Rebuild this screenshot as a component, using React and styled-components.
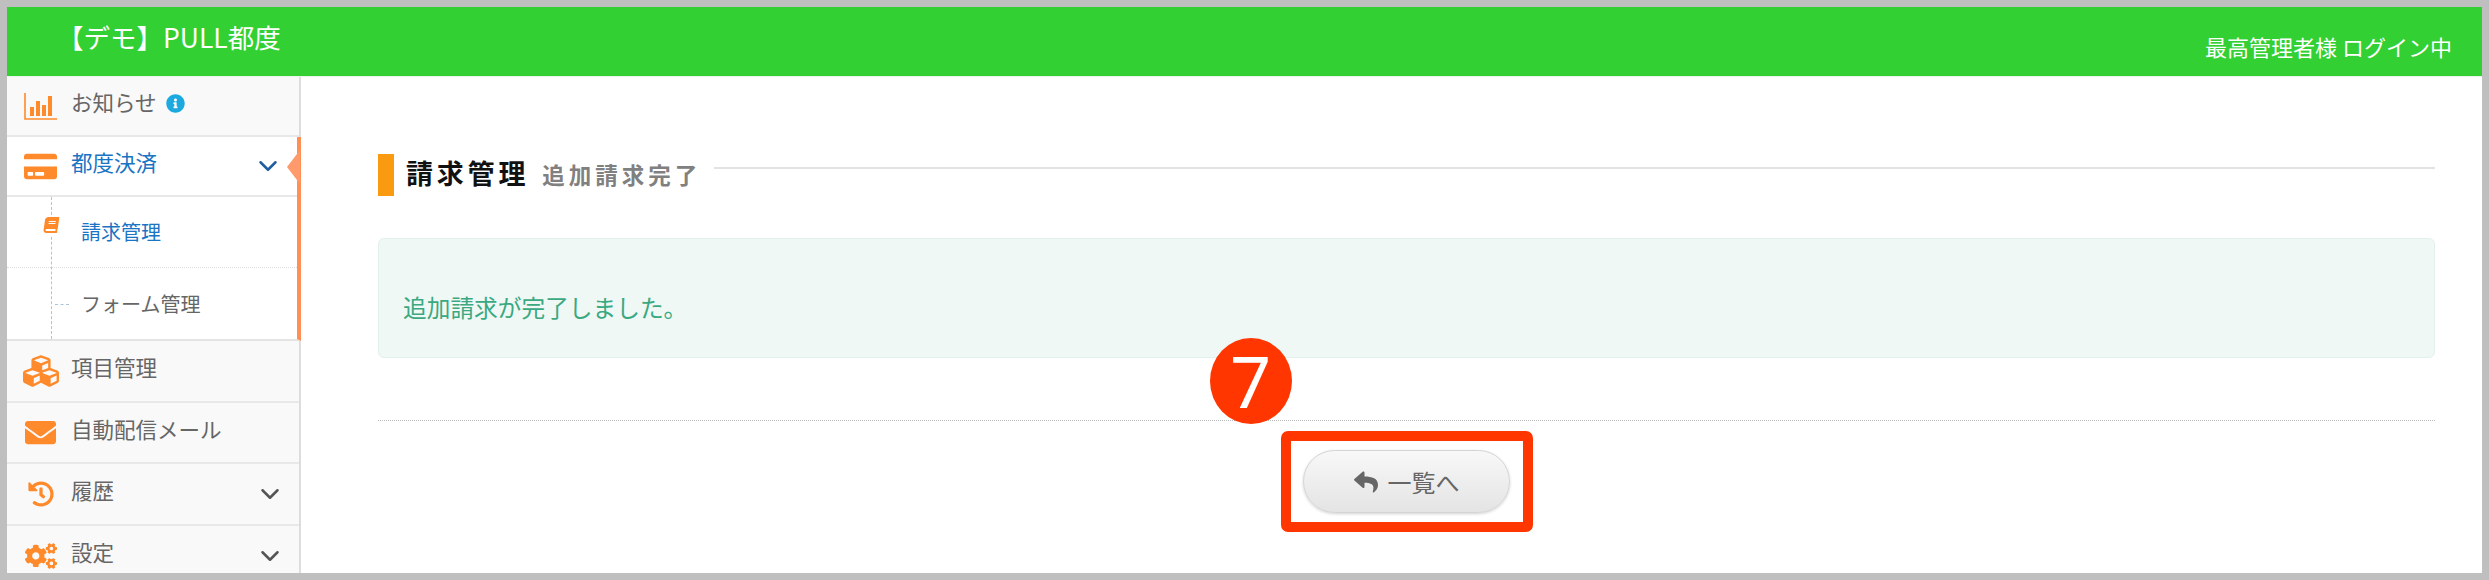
import styled, { createGlobalStyle } from 'styled-components';
import { FaBook, FaCogs, FaCreditCard, FaCubes, FaEnvelope, FaHistory, FaInfoCircle, FaReply } from 'react-icons/fa';
import { ChevronDown } from 'lucide-react';

const GlobalStyle = createGlobalStyle`
  html, body {
    margin: 0;
    padding: 0;
    background: #fff;
  }
  * {
    box-sizing: border-box;
  }
`;

const ChartIcon = () => (
  <svg width="33" height="27" viewBox="0 0 33 27">
    <path d="M1 0v26h32" fill="none" stroke="#ff8a2b" strokeWidth="1.6" />
    <path d="M6 14h4v9H6zM12 8h4v15h-4zM18 12h4v11h-4zM24 3h4v20h-4z" fill="#ff8a2b" />
  </svg>
);

const menu = [
  { label: 'お知らせ', icon: <ChartIcon />, info: true, height: 60 },
  { label: '項目管理', icon: <FaCubes size={36} />, height: 62 },
  { label: '自動配信メール', icon: <FaEnvelope size={31} />, height: 61 },
  { label: '履歴', icon: <FaHistory size={26} />, arrow: true, height: 62 },
  { label: '設定', icon: <FaCogs size={32} />, arrow: true, height: 62 },
];

export default function App() {
  return (
    <Frame>
      <GlobalStyle />
      <Header>
        <Brand>【デモ】PULL都度</Brand>
        <User>最高管理者様 ログイン中</User>
      </Header>
      <Body>
        <Sidebar>
          <MenuRow $height={menu[0].height}>
            <IconBox>{menu[0].icon}</IconBox>
            <Label>{menu[0].label}</Label>
            <Info><FaInfoCircle size={19} /></Info>
          </MenuRow>
          <ActiveGroup>
            <MenuRow $height={60} $active>
              <IconBox><FaCreditCard size={33} /></IconBox>
              <Label>都度決済</Label>
              <Arrow $active><ChevronDown size={30} /></Arrow>
            </MenuRow>
            <SubList>
              <SubRow $active>
                <BookIcon><FaBook size={16} /></BookIcon>
                請求管理
              </SubRow>
              <SubRow>
                <Dash />
                フォーム管理
              </SubRow>
            </SubList>
            <Pointer />
          </ActiveGroup>
          {menu.slice(1).map(item => (
            <MenuRow key={item.label} $height={item.height}>
              <IconBox>{item.icon}</IconBox>
              <Label>{item.label}</Label>
              {item.arrow && <Arrow><ChevronDown size={30} /></Arrow>}
            </MenuRow>
          ))}
        </Sidebar>
        <Main>
          <TitleRow>
            <TitleBar />
            <Title>請求管理</Title>
            <SubTitle>追加請求完了</SubTitle>
            <TitleLine />
          </TitleRow>
          <Alert>追加請求が完了しました。</Alert>
          <Divider />
          <Actions>
            <Highlight>
              <Badge>7</Badge>
              <BackButton>
                <FaReply size={24} />
                一覧へ
              </BackButton>
            </Highlight>
          </Actions>
        </Main>
      </Body>
    </Frame>
  );
}

const Frame = styled.div`
  width: 2489px;
  height: 580px;
  border: 7px solid #bfbfbf;
  display: flex;
  flex-direction: column;
  overflow: hidden;
  font-family: 'Noto Sans CJK JP', 'Noto Sans', sans-serif;
  color: #666;
`;

const Header = styled.header`
  height: 69px;
  flex: none;
  background: #32d032;
  color: #fff;
  display: flex;
  justify-content: space-between;
  padding: 0 30px 0 50px;
`;

const Brand = styled.div`
  font-size: 26.5px;
  line-height: 28px;
  padding-top: 16px;
`;

const User = styled.div`
  font-size: 22px;
  line-height: 24px;
  padding-top: 27px;
`;

const Body = styled.div`
  flex: 1;
  display: flex;
  min-height: 0;
  overflow: hidden;
  border-top: 1px solid #e8f5e8;
`;

const Sidebar = styled.nav`
  width: 294px;
  flex: none;
  background: #f9f9f9;
  border-right: 2px solid #ddd;
`;

const MenuRow = styled.div`
  height: ${props => props.$height}px;
  display: flex;
  align-items: center;
  font-size: 21.5px;
  background: ${props => (props.$active ? '#fff' : 'transparent')};
  color: ${props => (props.$active ? '#1a74c4' : '#666')};
  border-bottom: 2px solid #e8e8e8;
  padding-right: 14px;
`;

const Label = styled.span`
  padding-bottom: 9px;
`;

const IconBox = styled.span`
  width: 64px;
  padding-left: 3px;
  flex: none;
  display: flex;
  justify-content: center;
  color: #ff8a2b;
`;

const Info = styled.span`
  display: flex;
  margin: 0 0 5px 9px;
  color: #1ba9e0;
`;

const Arrow = styled.span`
  display: flex;
  margin-left: auto;
  color: ${props => (props.$active ? '#1f5f9f' : '#555')};
`;

const ActiveGroup = styled.div`
  position: relative;
  background: #fff;
  margin-right: -2px;
  border-right: 4px solid #ff8f55;
  border-bottom: 2px solid #e4e4e4;
`;

const Pointer = styled.span`
  position: absolute;
  top: 13px;
  right: -3px;
  border-style: solid;
  border-width: 17px 13px 17px 0;
  border-color: transparent #ff9a6c transparent transparent;
`;

const SubList = styled.div`
  position: relative;
  background: #fff;

  &::before {
    content: '';
    position: absolute;
    left: 44px;
    top: 0;
    bottom: 0;
    border-left: 1px dashed #a9c4e0;
  }
`;

const SubRow = styled.div`
  position: relative;
  height: 71px;
  display: flex;
  align-items: center;
  padding-left: 74px;
  font-size: 20px;
  color: ${props => (props.$active ? '#1a74c4' : '#666')};

  &:first-child {
    border-bottom: 1px dotted #ddd;
    padding-bottom: 2px;
  }
`;

const BookIcon = styled.span`
  position: absolute;
  left: 36px;
  top: 20px;
  height: 20px;
  display: flex;
  background: #fff;
  color: #ff8a2b;
  transform: skewX(-8deg);
`;

const Dash = styled.span`
  position: absolute;
  left: 48px;
  top: 36px;
  width: 14px;
  border-top: 1px dashed #a9c4e0;
`;

const Main = styled.main`
  flex: 1;
  background: #fff;
  padding: 77px 47px 0 77px;
  min-width: 0;
`;

const TitleRow = styled.div`
  display: flex;
  align-items: center;
  height: 42px;
`;

const TitleBar = styled.span`
  width: 16px;
  height: 42px;
  background: #fa9a10;
  margin-right: 12px;
`;

const Title = styled.h1`
  margin: 0 0 5px;
  font-size: 27px;
  font-weight: 700;
  letter-spacing: 3.8px;
  color: #111;
  line-height: 37px;
`;

const SubTitle = styled.span`
  font-size: 22.5px;
  font-weight: 700;
  letter-spacing: 4px;
  color: #808080;
  margin: 0 0 2px 13px;
`;

const TitleLine = styled.span`
  flex: 1;
  height: 2px;
  background: #e2e2e2;
  margin: -14px 0 0 13px;
`;

const Alert = styled.div`
  margin-top: 42px;
  height: 120px;
  background: #f0f8f5;
  border: 1px solid #e3f1ec;
  border-radius: 6px;
  color: #3aa981;
  font-size: 23.7px;
  line-height: 30px;
  padding: 53px 24px 0;
`;

const Divider = styled.hr`
  margin: 62px 0 0;
  border: none;
  border-top: 1px dotted #bbb;
`;

const Actions = styled.div`
  display: flex;
  justify-content: center;
  margin-top: 10px;
`;

const Highlight = styled.div`
  position: relative;
  width: 252px;
  height: 101px;
  border: 10px solid #ff3600;
  border-radius: 7px;
  display: flex;
  align-items: center;
  justify-content: center;
`;

const Badge = styled.span`
  position: absolute;
  left: -81px;
  top: -103px;
  width: 82px;
  height: 86px;
  border-radius: 50%;
  background: #ff3600;
  color: #fff;
  font-family: 'Noto Sans', sans-serif;
  font-size: 72px;
  line-height: 84px;
  text-align: center;
`;

const BackButton = styled.button`
  width: 207px;
  height: 63px;
  border: 1px solid #d4d4d4;
  border-radius: 32px;
  background: linear-gradient(#f8f8f8, #e4e4e4);
  box-shadow: 0 1px 3px rgba(0, 0, 0, 0.18);
  display: flex;
  align-items: center;
  justify-content: center;
  gap: 10px;
  padding: 0;
  color: #666;
  font-family: inherit;
  font-size: 24px;
`;
